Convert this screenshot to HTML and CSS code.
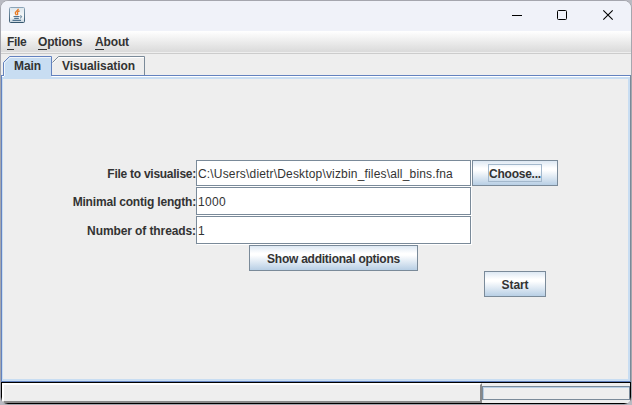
FILE: index.html
```html
<!DOCTYPE html>
<html lang="en">
<head>
<meta charset="utf-8">
<title>VizBin</title>
<link rel="stylesheet" href="styles.css">
</head>
<body>
<div class="window">
  <header class="titlebar">
    <svg class="logo" width="16" height="16" viewBox="0 0 16 16">
      <defs><linearGradient id="g" x1="0" y1="0" x2="0" y2="1"><stop offset="0" stop-color="#8ba4b8"/><stop offset="1" stop-color="#35566e"/></linearGradient>
      <linearGradient id="f" x1="0" y1="0" x2="0" y2="1"><stop offset="0" stop-color="#dde6ec"/><stop offset=".6" stop-color="#f8fafb"/><stop offset="1" stop-color="#c5d3dd"/></linearGradient></defs>
      <rect x=".5" y=".5" width="15" height="15" rx="1" fill="url(#f)" stroke="url(#g)"/>
      <path d="M9.300 1.800C9.500 4 5.800 4.200 6.300 6.200C6.500 7 7.200 7.500 7.400 8.200M10.600 3.800C8.200 4.700 8 5.400 8.600 6.200C9 6.900 8.700 7.400 8.200 8" fill="none" stroke="#e87921" stroke-width="1.300"/>
      <path d="M4.500 9.500H10.500M5.200 11.300H9.800M3.500 13.400H12" fill="none" stroke="#527490" stroke-width="1.200"/>
      <path d="M11 9C13.500 8.500 13 10.600 11 11.100" fill="none" stroke="#527490"/>
    </svg>
    <svg class="controls" width="102" height="12" viewBox="0 0 102 12" fill="none" stroke="#000">
      <path d="M0 6.500H10"/>
      <rect x="45.500" y="1.500" width="9" height="9" rx="1"/>
      <path d="M91.300 1.300L100.700 10.700M100.700 1.300L91.300 10.700" stroke-width="1.100"/>
    </svg>
  </header>
  <nav class="menubar">
    <span class="menu file"><u>F</u>ile</span><span class="menu options"><u>O</u>ptions</span><span class="menu about"><u>A</u>bout</span>
  </nav>
  <div class="tabs">
    <div class="tab main"><svg width="49" height="22"><path d="M.5 19.500V6.500L6.500.5H48.500V19.500V22H1V19.500Z" fill="#c8ddf2"/><path d="M1.500 20V7L7 1.500H48" fill="none" stroke="#fff" stroke-opacity=".7"/><path d="M.5 20V6.500L6.500.5H48.500V20" fill="none" stroke="#6382bf"/></svg><span>Main</span></div>
    <div class="tab vis"><svg width="93" height="19"><path d="M.5 6.500L6.500.5H92.500V19" fill="none" stroke="#7a8a99"/><path d="M1 7.500L7 1.500H92" fill="none" stroke="#fff"/></svg><span>Visualisation</span></div>
  </div>
  <main class="pane">
    <form class="form">
      <label class="l1">File to visualise:</label><div class="field"><span class="path">C:\Users\dietr\Desktop\vizbin_files\all_bins.fna</span></div><div class="button choose"><span>Choose...</span></div>
      <label class="l2">Minimal contig length:</label><div class="field"><span class="num">1000</span></div><i></i>
      <label class="l3">Number of threads:</label><div class="field"><span class="num">1</span></div><i></i>
    </form>
    <div class="button show"><span>Show additional options</span></div>
    <div class="button start"><span>Start</span></div>
  </main>
  <footer class="status"><div class="message"></div><div class="progress"></div></footer>
</div>
</body>
</html>
```
FILE: styles.css
```css
* { box-sizing: border-box; }
html { background: #b9bac2; }
body {
  margin: 0; width: 632px; height: 405px; overflow: hidden;
  font: bold 12px/14px "Liberation Sans", Arial, sans-serif; color: #333;
}
.window {
  width: 632px; height: 405px; border: 1px solid #a5a6ae;
  border-radius: 8px; overflow: hidden; background: #eee;
  display: flex; flex-direction: column;
}
.titlebar {
  height: 30px; flex: none; background: #f0f2f9; display: flex;
  justify-content: space-between; padding: 6px 17px 0 8px;
}
.controls { margin-top: 2px; }
.menubar {
  height: 23px; flex: none; display: flex; padding: 4px 0 0 6px;
  background: linear-gradient(#fff, #dadada 21px, #eee 21px, #eee 22px, #ccc 22px);
}
.menu { white-space: nowrap; letter-spacing: -.15px; }
.menu u { text-decoration: none; border-bottom: 1px solid #333; }
.file { width: 31px; letter-spacing: -.35px; }
.options { width: 57px; }
.tabs { height: 21px; flex: none; display: flex; padding: 2px 0 0 2px; }
.tab { height: 19px; display: grid; grid-template-rows: 19px; }
.tab > * { grid-area: 1 / 1; }
.tab svg { overflow: visible; }
.tab span { padding: 3px 0 0 11px; white-space: nowrap; letter-spacing: -.05px; }
.main { width: 49px; position: relative; z-index: 1; }
.main span { z-index: 1; }
.vis { width: 93px; }
.vis span { padding-left: 10px; }
.pane {
  height: 307px; flex: none;
  border: 1px solid #6382bf; border-right-color: #7a8a99;
  box-shadow: inset 0 1px #fff, inset 1px 0 #c8ddf2, inset 0 3px #c8ddf2, inset -2px -2px #c8ddf2;
  padding-top: 84px;
}
.form {
  display: grid; grid-template-columns: 194px 276px 86px;
  grid-template-rows: 27px 29px 29px; margin: 0;
}
.form label { text-align: right; align-self: center; white-space: nowrap; }
.form .l1 { letter-spacing: -.26px; }
.form .l2 { letter-spacing: -.18px; }
.form .l3 { letter-spacing: -.1px; }
.field {
  background: #fff; border: 1px solid #7a8a99; box-shadow: 1px 1px #fff;
  margin: 0 1px 1px 0; padding: 1px 0 0 1px;
  font-weight: normal; display: flex; align-items: center; white-space: nowrap;
}
.path { letter-spacing: .17px; }
.num { letter-spacing: .3px; }
.button {
  height: 26px; border: 1px solid #7a8a99; display: flex;
  align-items: center; justify-content: center; white-space: nowrap;
  background: linear-gradient(#dde8f3, #fff 30%, #fff 38%, #b8cfe5);
  letter-spacing: -.25px;
}
.choose span { border: 1px solid #a3b8cc; width: 54px; height: 18px; line-height: 18px; display: flex; justify-content: center; }
.show { width: 169px; margin-left: 247px; padding-top: 2px; }
.start { width: 62px; margin-left: 482px; padding-top: 2px; letter-spacing: -.1px; }
.status {
  height: 22px; flex: none; background: #eee;
  border: 1px solid #000; display: flex;
}
.message {
  width: 480px; border: solid; border-width: 2px; border-color: #fff #888 #888 #fff;
}
.progress {
  flex: 1; height: 14px; margin-top: 3px; border: 1px solid #7a8a99;
  box-shadow: inset 1px 1px #b8cfe5;
}
```
